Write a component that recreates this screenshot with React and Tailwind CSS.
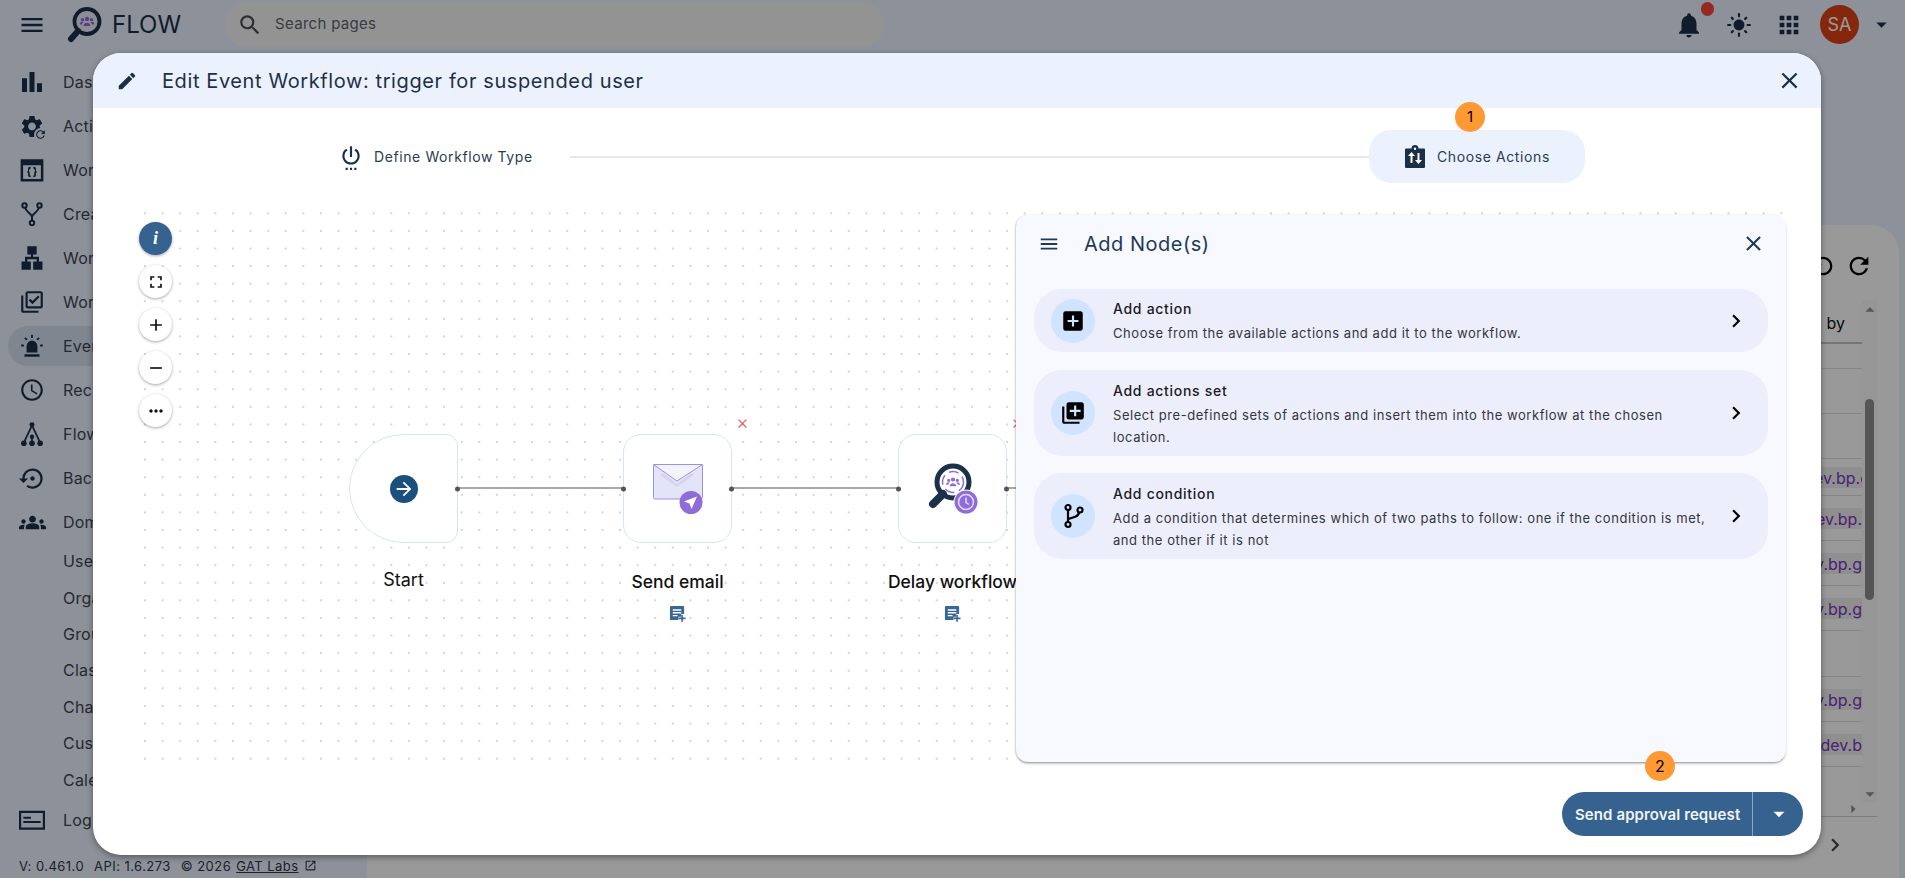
import React from "react";
import {
  MdMenu, MdSearch, MdNotifications, MdLightMode, MdApps, MdArrowDropDown, MdBarChart, MdSettings, MdRefresh,
  MdLan, MdOutlineLibraryAddCheck, MdOutlineSchedule, MdSettingsBackupRestore, MdGroups, MdEdit, MdClose,
  MdSettingsPower, MdFullscreen, MdAdd, MdRemove, MdMoreHoriz, MdArrowForward, MdAddBox, MdLibraryAdd,
  MdChevronRight, MdOpenInNew, MdArrowDropUp, MdArrowRight,
} from "react-icons/md";

const WindowCode = ({ size = 26 }) => (
  <svg width={size} height={size} viewBox="0 0 24 24" fill="currentColor">
    <path fillRule="evenodd" d="M1.500 2h21v20.500h-21zM3.800 7.500V20.200h16.400V7.500z" />
    <path d="M10.800 9c-1.800 0-2.500.7-2.500 2v1.500c0 .7-.3 1-1.100 1.300.8.300 1.100.6 1.100 1.300v1.500c0 1.300.7 2 2.500 2v-1.500c-.7 0-.9-.2-.9-.8v-1.500c0-.8-.3-1.500-1-2 .7-.5 1-1.200 1-2V11.300c0-.6.2-.8.9-.8zM13.200 9c1.800 0 2.500.7 2.500 2v1.500c0 .7.3 1 1.100 1.300-.8.3-1.100.6-1.100 1.300v1.500c0 1.300-.7 2-2.500 2v-1.500c.7 0 .9-.2.9-.8v-1.500c0-.8.3-1.500 1-2-.7-.5-1-1.200-1-2V11.300c0-.6-.2-.8-.9-.8z" />
  </svg>
);
const ForkIcon = ({ size = 24 }) => (
  <svg width={size} height={size} viewBox="0 0 24 24" fill="none" stroke="currentColor" strokeWidth="2">
    <circle cx="4.500" cy="3.500" r="2.200" />
    <circle cx="19.500" cy="3.500" r="2.200" />
    <circle cx="12" cy="21" r="2.200" />
    <path d="M5.200 5.700C5.500 10 12 11 12 15.500v3.300M18.800 5.700C18.500 10 12 11 12 15.500" />
  </svg>
);
const SirenIcon = ({ size = 26 }) => (
  <svg width={size} height={size} viewBox="0 0 24 24" fill="currentColor">
    <path d="M7 18v-6a5 5 0 0 1 10 0v6zM5 19.500h14V22H5z" />
    <path d="M12 1.500v3M5.500 4.500l1.800 1.800M18.500 4.500l-1.800 1.800M2 11.500h2.500M19.500 11.500H22" stroke="currentColor" strokeWidth="1.700" fill="none" />
  </svg>
);
const FlowIcon = ({ size = 26 }) => (
  <svg width={size} height={size} viewBox="0 0 24 24" fill="currentColor">
    <circle cx="12" cy="3.500" r="2.300" />
    <circle cx="12" cy="14.500" r="2" />
    <circle cx="4.500" cy="20.500" r="2.600" />
    <circle cx="12" cy="20.500" r="2.600" />
    <circle cx="19.500" cy="20.500" r="2.600" />
    <path d="M12 4 4.500 20M12 4l7.500 16M12 14.500v6" stroke="currentColor" strokeWidth="1.600" fill="none" />
  </svg>
);
const LogsIcon = ({ size = 26 }) => (
  <svg width={size} height={size} viewBox="0 0 24 24" fill="currentColor">
    <path fillRule="evenodd" d="M0 3.500h24V21H0zM2 5.500V19h20V5.500z" />
    <path d="M4 9h7v1.800H4zM4 13h16v1.800H4z" />
  </svg>
);
const ActionsIcon = () => (
  <span className="relative flex h-[26px] w-[26px] items-center justify-center">
    <MdSettings size={27} />
    <span className="absolute bottom-[-2px] right-[-2px] flex h-[13px] w-[13px] items-center justify-center rounded-full bg-[#ebf2ff]">
      <MdRefresh size={13} />
    </span>
  </span>
);
const ClipSwapIcon = ({ size = 24 }) => (
  <svg width={size} height={size} viewBox="0 0 24 24">
    <path fill="currentColor" d="M3 3.500h5.500a3.500 3.500 0 0 1 7 0H21a1 1 0 0 1 1 1V22a1 1 0 0 1-1 1H3a1 1 0 0 1-1-1V4.500a1 1 0 0 1 1-1z" />
    <circle cx="12" cy="3.700" r="1.200" fill="#fff" />
    <path fill="#fff" d="M8.500 7 5 11h2.500v7h2v-7H12zM14.500 8v7H12l3.500 4 3.500-4h-2.500V8z" />
  </svg>
);
const DocAddIcon = () => (
  <svg width="17" height="17" viewBox="0 0 18 18" className="text-[#3a6794]">
    <path fill="currentColor" d="M2 1h13a1 1 0 0 1 1 1v7.500h-3v3h-3V16H2a1 1 0 0 1-1-1V2a1 1 0 0 1 1-1z" />
    <path fill="#fff" d="M4 4.500h9v1.500H4zM4 7.500h9V9H4zM4 10.500h5V12H4z" />
    <path fill="currentColor" d="M13 10.500h1.700v2.800h2.800V15h-2.800v2.800H13V15h-2.800v-1.700H13z" />
  </svg>
);
const BranchIcon = () => (
  <svg width="24" height="26" viewBox="0 0 24 26" fill="none" stroke="currentColor" strokeWidth="2.200">
    <circle cx="7" cy="4.500" r="2.500" />
    <circle cx="7" cy="21.500" r="2.500" />
    <circle cx="19" cy="7" r="2.500" />
    <path d="M7 7v12M18 9.500c-.5 4-5 5-11 6.500" />
  </svg>
);
const People = ({ cx, cy, s, color }) => (
  <g fill={color} transform={`translate(${cx} ${cy}) scale(${s})`}>
    <circle cx="0" cy="-2.500" r="2.100" />
    <circle cx="-4.300" cy="-1.700" r="1.600" />
    <circle cx="4.300" cy="-1.700" r="1.600" />
    <path d="M-3.300 4.300c0-4 6.600-4 6.600 0zM-7 2.800c0-2.800 3-3 3.800-2-1 .6-1.500 1.200-1.500 2zM7 2.800c0-2.800-3-3-3.800-2 1 .6 1.500 1.200 1.500 2z" />
  </g>
);
const Logo = () => (
  <svg width="36" height="36" viewBox="0 0 36 36">
    <circle cx="20" cy="14.500" r="12.500" fill="#ecebf9" stroke="#1b3049" strokeWidth="3.800" />
    <path d="M11 24 4 32" stroke="#1b3049" strokeWidth="6" strokeLinecap="round" />
    <People cx={20} cy={14.500} s={1.050} color="#8e6cd9" />
  </svg>
);
const MailArt = () => (
  <svg width="50" height="50" viewBox="0 0 50 50">
    <rect x=".5" y=".5" width="49" height="34.500" rx="1.500" fill="#e3e3fa" stroke="#9a94e0" />
    <path d="M10 9 24 20l14-11 3 2L24 23 7 11z" fill="#c9c9e2" opacity=".6" />
    <path d="M24 17 .5 .5h49z" fill="#f3f3fe" stroke="#9a94e0" />
    <circle cx="38" cy="38.500" r="11.500" fill="#8e6cd9" />
    <path d="M44 32.500 31 37.500l5.500 2 2 5.500z" fill="#fff" />
  </svg>
);
const DelayArt = () => (
  <svg width="50" height="52" viewBox="0 0 50 52">
    <circle cx="25" cy="19" r="16" fill="#fff" stroke="#1b3049" strokeWidth="5" />
    <path d="M15 31 5 41" stroke="#1b3049" strokeWidth="8" strokeLinecap="round" />
    <circle cx="25" cy="19" r="10.500" fill="none" stroke="#8e6cd9" strokeWidth="1.500" strokeDasharray="10 5" />
    <People cx={25} cy={19} s={1} color="#8e6cd9" />
    <circle cx="38" cy="39" r="12.500" fill="#fff" />
    <circle cx="38" cy="39" r="11.500" fill="#8e6cd9" />
    <circle cx="38" cy="39" r="7.500" fill="none" stroke="#e4dcf8" strokeWidth="1.500" />
    <path d="M38 34.500V39.500l3 2" fill="none" stroke="#e4dcf8" strokeWidth="1.500" />
  </svg>
);

const navTop = [
  ["Dashboard", <MdBarChart size={30} />],
  ["Actions", <ActionsIcon />],
  ["Workflow Editor", <WindowCode />],
  ["Create Workflow", <ForkIcon />],
  ["Workflow Tree", <MdLan size={28} />],
  ["Workflow Sets", <MdOutlineLibraryAddCheck size={26} />],
  ["Event Workflows", <SirenIcon />],
  ["Recurring", <MdOutlineSchedule size={26} />],
  ["Flows", <FlowIcon />],
  ["Backups", <MdSettingsBackupRestore size={27} />],
  ["Domain", <MdGroups size={27} />],
];
const navSub = ["Users", "Organization", "Groups", "Classroom", "Chat", "Custom", "Calendar"];

const rows = [
  [25, "", ""], [45, "", ""], [45, "", ""],
  [37, "alex@dev.bp.g", "-mr-[8px]"], [45, "maria@dev.bp.", ""], [45, "sam@dev.bp.g", ""], [45, "lena@dev.bp.g", ""],
  [46, "", ""], [45, "joe@dev.bp.g", ""], [45, "mark@dev.b", ""],
];

function NavRow({ icon, label, active }) {
  return (
    <div className="flex h-11 items-center pl-2">
      <div className={`flex h-10 w-full items-center rounded-l-[20px] ${active ? "bg-[#d4dff0]" : ""}`}>
        <span className="flex w-12 shrink-0 items-center justify-center">{icon}</span>
        <span className="ml-[7px] whitespace-nowrap text-[16px] tracking-[0.2px] text-[#3c4654]">{label}</span>
      </div>
    </div>
  );
}

function Step({ icon, label }) {
  return (
    <div className="flex items-center gap-[10px] text-[14px] tracking-[0.6px] text-[#2b3d52]">
      <span className="text-[#1b2f47]">{icon}</span>
      <span className="whitespace-nowrap">{label}</span>
    </div>
  );
}

function Handle({ side }) {
  return <span className={`absolute top-1/2 h-[5px] w-[5px] -translate-y-1/2 rounded-full bg-[#555] ${side === "l" ? "left-[-3px]" : "right-[-3px]"}`} />;
}

function FlowNode({ left, label, art, start, tool }) {
  return (
    <div className={`absolute top-[226px] flex w-[109px] flex-col items-center ${left}`}>
      <div className={`relative flex h-[109px] w-[109px] items-center justify-center border border-[#d7e3fc] bg-white ${start ? "rounded-l-[55px] rounded-r-[12px]" : "rounded-[18px]"}`}>
        {!start && <Handle side="l" />}
        <Handle side="r" />
        {art}
        {!start && <span className="absolute right-[-19px] top-[-19px] text-[#e06565]"><MdClose size={15} /></span>}
      </div>
      <div className={`whitespace-nowrap leading-[28px] text-[#111] ${start ? "mt-[23px] text-[18px]" : "mt-[25px] text-[17.5px] font-medium"}`}>{label}</div>
      {tool && <div className="mt-[9px]"><DocAddIcon /></div>}
    </div>
  );
}

function CtrlButton({ children, className = "bg-white text-[#111]" }) {
  return <button className={`flex h-[33px] w-[33px] items-center justify-center rounded-full shadow-[0_1px_3px_rgba(0,0,0,0.35)] ${className}`}>{children}</button>;
}

function NodeCard({ icon, title, desc, height }) {
  return (
    <div className={`flex items-center rounded-[28px] bg-[#eceefb] pl-[17px] pr-[19px] ${height}`}>
      <span className="flex h-11 w-11 shrink-0 items-center justify-center rounded-full bg-[#d0e4ff] text-black">{icon}</span>
      <div className="ml-[18px] flex-1 pt-[2px]">
        <div className="text-[14px] font-medium leading-[20px] tracking-[0.7px] text-[#1b1b1f]">{title}</div>
        <div className="mt-[3px] text-[13px] leading-[22px] tracking-[0.55px] text-[#33363c]">{desc}</div>
      </div>
      <span className="ml-4 shrink-0 text-black"><MdChevronRight size={26} /></span>
    </div>
  );
}

export default function App() {
  return (
    <div className="relative flex h-screen w-full flex-col overflow-hidden bg-[#ebf2ff] font-[Inter,sans-serif] text-[#1b3049]">
      {/* top bar */}
      <header className="flex h-[49px] shrink-0 items-center">
        <button className="ml-[18px] flex w-[28px] justify-center"><MdMenu size={28} /></button>
        <div className="ml-[21px] flex items-center">
          <Logo />
          <span className="ml-[9px] text-[24px] leading-none text-[#1b3049]">FLOW</span>
        </div>
        <div className="ml-[44px] flex h-[45px] w-[659px] items-center rounded-[24px] bg-[#f7f5f7] pl-[12px]">
          <MdSearch size={26} className="text-[#4a4d55]" />
          <span className="ml-[12px] text-[15px] tracking-[0.3px] text-[#5e646c]">Search pages</span>
        </div>
        <div className="flex-1" />
        <div className="relative flex w-[30px] justify-center"><MdNotifications size={30} />
          <span className="absolute right-[-10px] top-[-8px] h-[14px] w-[13px] rounded-full bg-[#f5463c]" />
        </div>
        <div className="ml-[22px] flex justify-center"><MdLightMode size={26} /></div>
        <div className="ml-[23px] flex justify-center"><MdApps size={28} /></div>
        <div className="ml-[17px] flex h-[39px] w-[39px] items-center justify-center rounded-full bg-[#dc4114] text-[18px] text-white">SA</div>
        <div className="ml-[10px] mr-[11px]"><MdArrowDropDown size={25} /></div>
      </header>

      <div className="flex min-h-0 flex-1">
        {/* sidebar */}
        <aside className="flex w-[367px] shrink-0 flex-col pt-[11px]">
          {navTop.map(([label, icon]) => (
            <NavRow key={label} label={label} icon={icon} active={label === "Event Workflows"} />
          ))}
          <div className="-mt-[1px] flex flex-col">
            {navSub.map((s) => (
              <div key={s} className="flex h-[36.4px] items-center pl-[63px] text-[16px] tracking-[0.2px] text-[#3c4654]">{s}</div>
            ))}
          </div>
          <NavRow label="Logs" icon={<LogsIcon />} />
          <div className="mt-[14px] flex items-center whitespace-nowrap pl-[19px] text-[13px] leading-[20px] tracking-[0.45px] text-[#2f3946]">
            <span>V: 0.461.0</span>
            <span className="ml-[10px]">API: 1.6.273</span>
            <span className="ml-[10px]">© 2026</span>
            <span className="ml-[5px] underline">GAT Labs</span>
            <MdOpenInNew size={13} className="ml-[5px]" />
          </div>
        </aside>

        {/* main */}
        <main className="flex min-w-0 flex-1 flex-col pr-[6px] pt-[176px]">
          <div className="flex min-h-0 flex-1 flex-col rounded-t-[28px] bg-white pr-[22px]">
            <div className="flex h-[75px] shrink-0 items-center justify-end pr-[4px] pt-[6px] text-black">
              <MdRefresh size={28} className="mr-[8px] -scale-x-100" />
              <MdRefresh size={28} />
            </div>
            <div className="flex shrink-0">
              <div className="min-w-0 flex-1 overflow-hidden">
                <div className="flex h-[44px] items-center justify-end border-b-2 border-[#c4c4c4] pr-[17px] pt-[4px] text-[16px] text-[#111]">
                  <span>Created</span><span className="ml-[12px]">by</span>
                </div>
                {rows.map(([h, chip, shift], i) => (
                  <div key={i} style={{ height: h }} className="flex items-center justify-end whitespace-nowrap border-b border-[#dedede]">
                    {chip && <span className={`flex h-[21px] items-center bg-[#eeeeee] pl-2 pt-[2px] text-[16px] text-[#7d35c1] ${shift}`}>{chip}</span>}
                  </div>
                ))}
              </div>
              <div className="flex h-[502px] w-[15px] shrink-0 flex-col items-center bg-[#fafafa] text-[#8e8e8e]">
                <MdArrowDropUp size={22} className="mt-[-1px] shrink-0" />
                <div className="mt-[78px] h-[201px] w-[9px] shrink-0 rounded-full bg-[#8e8e8e]" />
                <div className="flex-1" />
                <MdArrowDropDown size={22} className="mb-[-3px] shrink-0" />
              </div>
            </div>
            <div className="flex h-[15px] shrink-0 items-center justify-end border-b border-[#d0d0d0] pr-[14px] text-[#8e8e8e]">
              <MdArrowRight size={20} />
            </div>
            <div className="flex h-[54px] shrink-0 items-center justify-end pr-[29px] text-[#444]">
              <MdChevronRight size={26} className="mb-[-1px]" />
            </div>
          </div>
        </main>
      </div>

      {/* dim overlay */}
      <div className="absolute inset-0 bg-black/40" />

      {/* modal */}
      <div className="absolute left-[93px] top-[53px] flex h-[802px] w-[1728px] flex-col overflow-hidden rounded-[28px] bg-white shadow-[0_2px_6px_rgba(0,0,0,0.4)]">
        <div className="flex h-[55px] shrink-0 items-center bg-[#ebf2fe] pl-[23px] pr-[18px] text-[#1b2f47]">
          <MdEdit size={22} />
          <span className="ml-[24px] flex-1 text-[20px] tracking-[0.6px] text-[#1f3046]">Edit Event Workflow: trigger for suspended user</span>
          <MdClose size={27} />
        </div>

        <div className="ml-[245px] mt-[22px] flex h-[53px] w-[1247px] shrink-0 items-center">
          <Step icon={<MdSettingsPower size={26} className="block" />} label="Define Workflow Type" />
          <div className="ml-[37px] h-[2px] flex-1 bg-[#e8e8e8]" />
          <div className="relative flex h-[53px] w-[216px] items-center rounded-[22px] bg-[#ebf2fe] pl-[34px]">
            <Step icon={<ClipSwapIcon size={24} />} label="Choose Actions" />
            <span className="absolute left-[86px] top-[-28px] flex h-[30px] w-[30px] items-center justify-center rounded-full bg-[#ff9933] text-[15px] text-black">1</span>
          </div>
        </div>

        {/* canvas */}
        <div className="relative ml-[35px] mt-[25px] h-[554px] w-[1658px] shrink-0">
          <div className="absolute bottom-0 left-[16px] right-0 top-0 [background-image:radial-gradient(circle,#d4d4d4_0.7px,transparent_0.9px)] [background-position:-7.8px_-3.5px] [background-size:17.6px_17.6px]" />
          <div className="absolute left-[329px] top-[279px] h-[2px] w-[166px] bg-[#a8a8a8]" />
          <div className="absolute left-[605px] top-[279px] h-[2px] w-[165px] bg-[#a8a8a8]" />
          <div className="absolute left-[880px] top-[279px] h-[2px] w-[20px] bg-[#a8a8a8]" />

          <div className="absolute left-[11px] top-[14px] flex flex-col gap-[10px]">
            <CtrlButton className="bg-[#36628f] font-['Liberation_Serif',serif] text-[18px] font-bold italic text-white">i</CtrlButton>
            <CtrlButton><MdFullscreen size={20} /></CtrlButton>
            <CtrlButton><MdAdd size={20} /></CtrlButton>
            <CtrlButton><MdRemove size={20} /></CtrlButton>
            <CtrlButton><MdMoreHoriz size={20} /></CtrlButton>
          </div>

          <FlowNode left="left-[221px]" label="Start" start art={
            <span className="flex h-7 w-7 items-center justify-center rounded-full bg-[#1a4f7e] text-white"><MdArrowForward size={22} /></span>
          } />
          <FlowNode left="left-[495px]" label="Send email" tool art={<MailArt />} />
          <FlowNode left="left-[770px]" label="Delay workflow" tool art={<DelayArt />} />

          <div className="absolute bottom-0 right-0 top-[7px] w-[770px] rounded-[12px] bg-[#f8f9ff] shadow-[0_2px_3px_-1px_rgba(0,0,0,0.45),-1px_0_2px_rgba(0,0,0,0.12)]">
            <div className="flex h-[57px] items-center pl-[22px] pr-[20px] text-[#1f3a56]">
              <MdMenu size={22} />
              <span className="ml-[24px] flex-1 text-[20px] tracking-[0.5px]">Add Node(s)</span>
              <MdClose size={25} />
            </div>
            <div className="ml-[18px] mt-[17px] flex w-[734px] flex-col">
              <NodeCard height="h-[63px]" icon={<MdAddBox size={26} />} title="Add action" desc="Choose from the available actions and add it to the workflow." />
              <div className="h-[18px]" />
              <NodeCard height="h-[86px]" icon={<MdLibraryAdd size={26} />} title="Add actions set" desc="Select pre-defined sets of actions and insert them into the workflow at the chosen location." />
              <div className="h-[17px]" />
              <NodeCard height="h-[86px]" icon={<BranchIcon />} title="Add condition" desc="Add a condition that determines which of two paths to follow: one if the condition is met, and the other if it is not" />
            </div>
          </div>
        </div>

        <div className="mt-[30px] flex shrink-0 justify-end pr-[18px]">
          <div className="relative flex h-[44px] w-[241px] items-center rounded-full bg-[#36628f] text-white">
            <span className="h-[44px] w-[191px] whitespace-nowrap border-r border-[#8aa6c4] pl-[13px] pt-[1px] text-[15px] font-semibold leading-[44px] tracking-[0.1px] text-[#f0f4fa]">Send approval request</span>
            <span className="flex flex-1 justify-center pl-[2px]"><MdArrowDropDown size={26} /></span>
            <span className="absolute left-[83px] top-[-41px] flex h-[30px] w-[30px] items-center justify-center rounded-full bg-[#ff9933] text-[16px] text-black">2</span>
          </div>
        </div>
      </div>
    </div>
  );
}
